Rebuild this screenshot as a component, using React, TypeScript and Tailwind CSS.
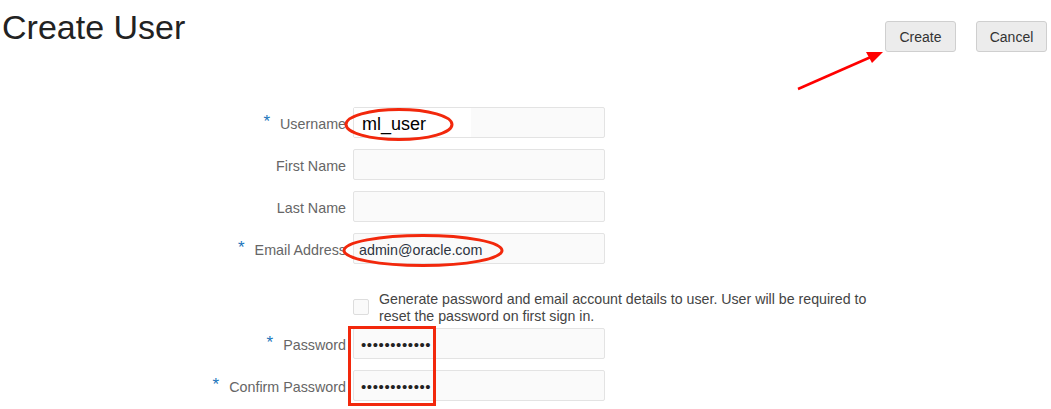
import React from "react";

function Label({ text, required }: { text: string; required?: boolean }) {
  return (
    <div className="w-[346px] flex justify-end items-center pt-[5px] text-[14.3px] text-[#666666]">
      {required && <span className="text-[#1b75bb] text-[17px] mr-[10px] -mt-[8px] leading-none">*</span>}
      <span>{text}</span>
    </div>
  );
}

function Field({ children }: { children?: React.ReactNode }) {
  return (
    <div className="w-[252px] h-[31px] bg-[#fafafa] border border-[#e3e3e3] rounded-[2px] flex items-center relative">
      {children}
    </div>
  );
}

export default function App() {
  return (
    <div
      className="relative w-[1051px] h-[409px] bg-white overflow-hidden"
      style={{ fontFamily: '"Liberation Sans", Arial, sans-serif' }}
    >
      <div className="h-[52px] flex justify-between items-start">
        <h1 className="pt-[8px] pl-[2px] text-[34px] leading-[38px] text-[#222222]">Create User</h1>
        <div className="flex gap-[20px] pt-[21px] pr-[4px]">
          <button className="w-[71px] h-[31px] pt-[2px] bg-[#ececec] border border-[#cfcfcf] rounded-[3px] text-[14px] text-[#333333]">
            Create
          </button>
          <button className="w-[71px] h-[31px] pt-[2px] bg-[#ececec] border border-[#cfcfcf] rounded-[3px] text-[14px] text-[#333333]">
            Cancel
          </button>
        </div>
      </div>

      <div className="mt-[55px] flex flex-col">
        <div className="flex gap-[7px] h-[31px]">
          <Label text="Username" required />
          <Field>
            <div className="absolute left-0 top-0 w-[117px] h-[29px] bg-white" />
            <span className="relative pl-[8px] pt-[4px] text-[18px] text-black">ml_user</span>
          </Field>
        </div>
        <div className="flex gap-[7px] h-[31px] mt-[11px]">
          <Label text="First Name" />
          <Field />
        </div>
        <div className="flex gap-[7px] h-[31px] mt-[11px]">
          <Label text="Last Name" />
          <Field />
        </div>
        <div className="flex gap-[7px] h-[31px] mt-[11px]">
          <Label text="Email Address" required />
          <Field>
            <span className="pl-[5px] pt-[5px] text-[14.3px] text-[#2d3440]">admin@oracle.com</span>
          </Field>
        </div>
        <div className="flex gap-[7px] mt-[26px] h-[38px]">
          <div className="w-[346px]" />
          <div className="flex items-start gap-[10px]">
            <div className="mt-[9px] w-[16px] h-[16px] bg-[#fafafa] border border-[#dddddd] rounded-[2px]" />
            <p className="w-[500px] pt-[1px] text-[14.2px] leading-[17px] text-[#444444]">
              Generate password and email account details to user. User will be required to reset the password on first sign in.
            </p>
          </div>
        </div>
        <div className="flex gap-[7px] h-[31px] mt-[0px]">
          <Label text="Password" required />
          <Field>
            <span className="pl-[7px] pt-[4px] text-[15px] tracking-[0.6px] text-[#222222]">••••••••••••</span>
          </Field>
        </div>
        <div className="flex gap-[7px] h-[31px] mt-[11px]">
          <Label text="Confirm Password" required />
          <Field>
            <span className="pl-[7px] pt-[4px] text-[15px] tracking-[0.6px] text-[#222222]">••••••••••••</span>
          </Field>
        </div>
      </div>

      <svg className="absolute inset-0 pointer-events-none" width="1051" height="409" viewBox="0 0 1051 409">
        <ellipse cx="399" cy="124.5" rx="53" ry="15" fill="none" stroke="#f2280c" strokeWidth="3" />
        <ellipse cx="423" cy="250.5" rx="79" ry="15" fill="none" stroke="#f2280c" strokeWidth="3" />
        <rect x="349.5" y="327.5" width="85" height="77" fill="none" stroke="#f2280c" strokeWidth="3" />
        <line x1="798" y1="89" x2="872" y2="56.5" stroke="#ff0000" strokeWidth="2.5" />
        <polygon points="883,52 866,52 872,63" fill="#ff0000" />
      </svg>
    </div>
  );
}
